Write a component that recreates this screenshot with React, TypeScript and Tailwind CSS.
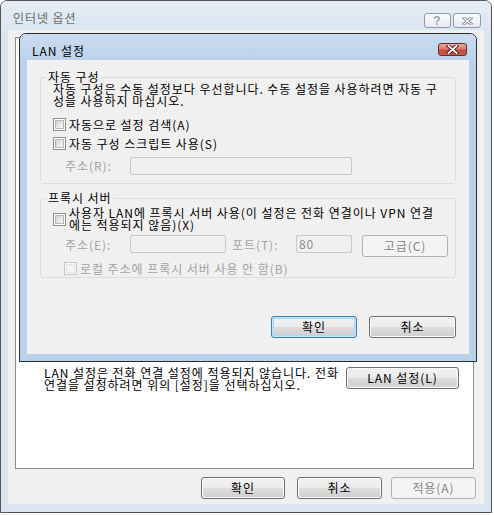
import type { ReactNode } from 'react';

const ui = "font-['Noto_Sans_CJK_KR','Noto_Sans',sans-serif] text-[12px] leading-[12px] tracking-[0.95px]";

function CheckBox({ disabled }: { disabled?: boolean }) {
    return (
        <span
            className={`flex h-[13px] w-[13px] shrink-0 items-center justify-center border ${
                disabled ? 'border-[#c6c6c6] bg-[#f7f7f7]' : 'border-[#8e8f8f] bg-white'
            }`}
        >
            <span
                className={`h-[9px] w-[9px] border ${
                    disabled
                        ? 'border-[#e3e3e3] bg-[#f4f4f4]'
                        : 'border-[#b4b7bb] bg-[linear-gradient(135deg,#cfd2d6_0%,#e9eaeb_60%,#f8f8f8_100%)]'
                }`}
            />
        </span>
    );
}

type ButtonKind = 'normal' | 'default' | 'disabled';

function WinButton({
    children,
    kind = 'normal',
    className = '',
}: {
    children: ReactNode;
    kind?: ButtonKind;
    className?: string;
}) {
    const look =
        kind === 'disabled'
            ? 'border-[#adb2b5] bg-[#f4f4f4] text-[#838383]'
            : kind === 'default'
              ? 'border-[#3c7fb1] text-black shadow-[inset_0_0_0_1px_#c4e5f6,inset_0_0_0_2px_#a9d9f2] bg-[linear-gradient(180deg,#f2f2f2_0%,#ebebeb_50%,#dddddd_51%,#cfcfcf_100%)]'
              : 'border-[#707070] text-black shadow-[inset_0_0_0_1px_#fbfbfb] bg-[linear-gradient(180deg,#f2f2f2_0%,#ebebeb_50%,#dddddd_51%,#cfcfcf_100%)]';

    return (
        <button
            type="button"
            className={`flex h-[22px] shrink-0 items-center justify-center rounded-[3px] border ${look} ${className}`}
        >
            {children}
        </button>
    );
}

function Field({ className = '', children }: { className?: string; children?: ReactNode }) {
    return (
        <div
            className={`flex h-[18px] shrink-0 items-center rounded-[2px] border border-[#c9c9c9] bg-[#f0f0f0] pl-[2px] text-[#8a8a8a] ${className}`}
        >
            {children}
        </div>
    );
}

function LanDialog() {
    return (
        <div className="absolute left-[18px] top-[32px] flex h-[329px] w-[458px] flex-col rounded-t-[7px] border border-[#2b2b2b] bg-[#b9d1ea]">
            <div className="flex h-[26px] shrink-0 items-start justify-between rounded-t-[6px] bg-[linear-gradient(180deg,#cadcf0_0%,#bcd3eb_100%)]">
                <span className="pl-[12px] pt-[11px] text-black">LAN 설정</span>
                <span className="mr-[9px] mt-[9px] flex h-[13px] w-[29px] items-center justify-center rounded-[3px] border border-[#6b2a25] bg-[linear-gradient(180deg,#e8aaa2_0%,#d77a70_45%,#c44b40_55%,#c95a4c_100%)]">
                    <svg width="13" height="9" viewBox="0 0 13 9">
                        <path d="M2.5 1 L10.5 8 M10.5 1 L2.5 8" stroke="#4b1712" strokeWidth="3.6" strokeLinecap="square" />
                        <path d="M2.5 1 L10.5 8 M10.5 1 L2.5 8" stroke="#ffffff" strokeWidth="1.8" strokeLinecap="square" />
                    </svg>
                </span>
            </div>

            <div className="mx-[7px] h-[294px] bg-[#f0f0f0] px-[13px]">
                <fieldset className="mt-[11px] h-[113px] rounded-[3px] border border-[#d5dfe5]">
                    <legend className="ml-[5px] px-[2px] text-black">자동 구성</legend>
                    <p className="whitespace-nowrap pl-[12px] text-black">
                        자동 구성은 수동 설정보다 우선합니다. 수동 설정을 사용하려면 자동 구
                        <br />
                        성을 사용하지 마십시오.
                    </p>
                    <div className="mt-[11px] flex h-[13px] items-center gap-[3px] pl-[12px] text-black">
                        <CheckBox />
                        <span>자동으로 설정 검색(A)</span>
                    </div>
                    <div className="mt-[6px] flex h-[13px] items-center gap-[3px] pl-[12px] text-black">
                        <CheckBox />
                        <span>자동 구성 스크립트 사용(S)</span>
                    </div>
                    <div className="mt-[7px] flex items-center pl-[24px] text-[#a3a3a3]">
                        <span className="w-[65px]">주소(R):</span>
                        <Field className="w-[222px]" />
                    </div>
                </fieldset>

                <fieldset className="mt-[8px] h-[86px] rounded-[3px] border border-[#d5dfe5]">
                    <legend className="ml-[5px] px-[2px] text-black">프록시 서버</legend>
                    <div className="mt-[3px] flex items-center gap-[3px] pl-[12px] text-black">
                        <CheckBox />
                        <span className="whitespace-nowrap">
                            사용자 LAN에 프록시 서버 사용(이 설정은 전화 연결이나 VPN 연결
                            <br />
                            에는 적용되지 않음)(X)
                        </span>
                    </div>
                    <div className="mt-[4px] flex items-start pl-[24px] text-[#a3a3a3]">
                        <span className="mt-[4px] w-[65px]">주소(E):</span>
                        <Field className="w-[96px]" />
                        <span className="ml-[6px] mt-[4px] w-[64px]">포트(T):</span>
                        <Field className="w-[56px]">80</Field>
                        <WinButton kind="disabled" className="ml-[10px] w-[86px]">
                            고급(C)
                        </WinButton>
                    </div>
                    <div className="mt-[5px] flex h-[13px] items-center gap-[3px] pl-[23px] text-[#a3a3a3]">
                        <CheckBox disabled />
                        <span>로컬 주소에 프록시 서버 사용 안 함(B)</span>
                    </div>
                </fieldset>

                <div className="mt-[38px] flex justify-end gap-[12px]">
                    <WinButton kind="default" className="w-[86px]">
                        확인
                    </WinButton>
                    <WinButton className="w-[87px]">취소</WinButton>
                </div>
            </div>
        </div>
    );
}

export default function App() {
    return (
        <div className={`${ui} relative flex h-[513px] w-[492px] flex-col rounded-t-[7px] border border-[#555555] bg-[#dbe5f1]`}>
            <div className="flex h-[29px] shrink-0 items-start justify-between rounded-t-[6px] bg-[linear-gradient(180deg,#e6edf5_0%,#dbe5f1_100%)]">
                <span className="pl-[12px] pt-[11px] text-[#6b6b6b]">인터넷 옵션</span>
                <div className="mr-[10px] mt-[12px] flex gap-[2px]">
                    <span className="flex h-[15px] w-[27px] items-center justify-center rounded-[3px] border border-[#8c9bb0] bg-[linear-gradient(180deg,#fafbfd_0%,#e6ebf2_100%)] font-['Liberation_Sans',sans-serif] text-[12px] font-bold text-[#9aa4b2]">
                        ?
                    </span>
                    <span className="flex h-[15px] w-[28px] items-center justify-center rounded-[3px] border border-[#8c9bb0] bg-[linear-gradient(180deg,#fafbfd_0%,#e6ebf2_100%)]">
                        <svg width="11" height="8" viewBox="0 0 11 8">
                            <path d="M2 1 L9 7 M9 1 L2 7" stroke="#7c8696" strokeWidth="3" strokeLinecap="square" />
                            <path d="M2 1 L9 7 M9 1 L2 7" stroke="#f4f6f9" strokeWidth="1.4" strokeLinecap="square" />
                        </svg>
                    </span>
                </div>
            </div>

            <div className="mx-[7px] flex h-[474px] flex-col bg-[#f0f0f0]">
                <div className="ml-[7px] mt-[7px] h-[432px] w-[459px] border border-[#898c95] bg-white">
                    <div className="ml-[28px] mr-[14px] mt-[329px] flex items-start">
                        <p className="whitespace-nowrap text-black">
                            LAN 설정은 전화 연결 설정에 적용되지 않습니다. 전화
                            <br />
                            연결을 설정하려면 위의 [설정]을 선택하십시오.
                        </p>
                        <WinButton className="ml-auto w-[113px]">LAN 설정(L)</WinButton>
                    </div>
                </div>
                <div className="mr-[8px] mt-[8px] flex justify-end">
                    <WinButton className="w-[84px]">확인</WinButton>
                    <WinButton className="ml-[12px] w-[85px]">취소</WinButton>
                    <WinButton kind="disabled" className="ml-[9px] w-[85px]">
                        적용(A)
                    </WinButton>
                </div>
            </div>

            <LanDialog />
        </div>
    );
}
